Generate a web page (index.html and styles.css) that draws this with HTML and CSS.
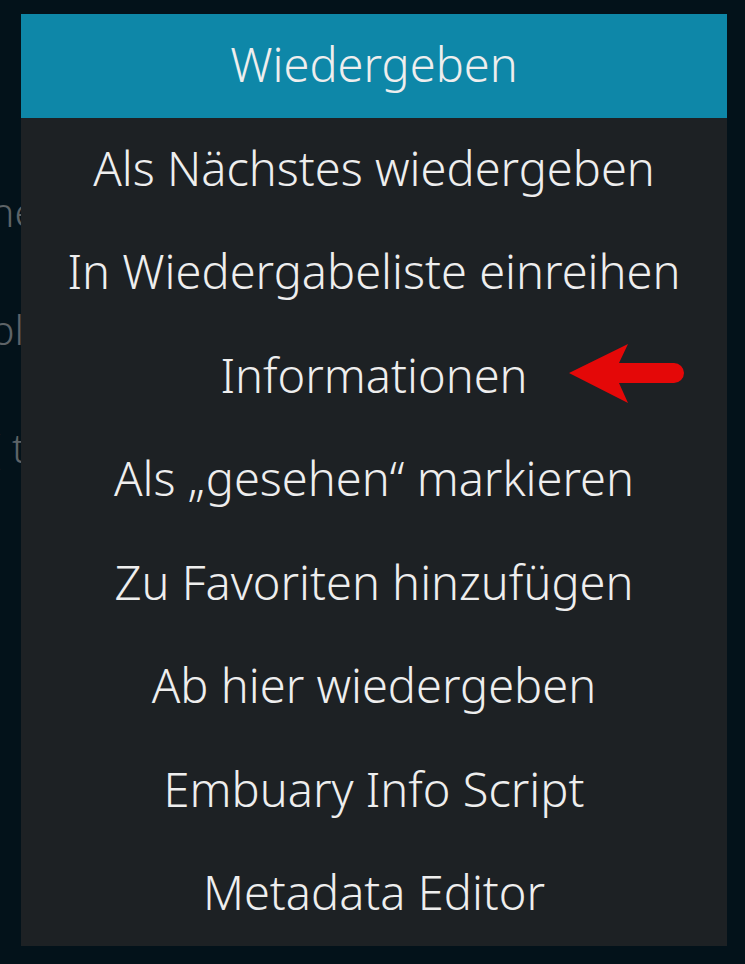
FILE: index.html
```html
<!DOCTYPE html>
<html lang="de">
<head>
  <meta charset="UTF-8">
  <meta name="viewport" content="width=device-width, initial-scale=1.0">
  <title>Kontextmenü</title>
  <link rel="stylesheet" href="styles.css">
</head>
<body>
  <!-- Liste im Hintergrund, vom Menü verdeckt -->
  <div class="backdrop">
    <div class="backdrop-line">ne</div>
    <div class="backdrop-line">bl</div>
    <div class="backdrop-line">( t</div>
  </div>

  <div class="menu">
    <div class="menu-header">Wiedergeben</div>
    <div class="menu-item">Als Nächstes wiedergeben</div>
    <div class="menu-item">In Wiedergabeliste einreihen</div>
    <div class="menu-item">
      Informationen
      <svg class="pointer" width="125" height="68" viewBox="0 0 125 68">
        <path d="M4 33 L63 4 L54 23 H109 A10 10 0 0 1 109 43 H54 L63 63 Z" fill="#e40808"/>
      </svg>
    </div>
    <div class="menu-item">Als „gesehen“ markieren</div>
    <div class="menu-item">Zu Favoriten hinzufügen</div>
    <div class="menu-item">Ab hier wiedergeben</div>
    <div class="menu-item">Embuary Info Script</div>
    <div class="menu-item">Metadata Editor</div>
  </div>
</body>
</html>
```

FILE: styles.css
```css
body {
  margin: 0;
  padding: 14px 0 0 21px;
  height: 964px;
  box-sizing: border-box;
  background: #03121a;
  font-family: 'Noto Sans', 'Open Sans', sans-serif;
  font-weight: 300;
  color: #eeeeee;
  overflow: hidden;
  position: relative;
}

.backdrop {
  position: absolute;
  left: -10px;
  top: 152px;
  font-size: 41px;
  line-height: 118px;
  color: #5d6367;
}

.menu {
  position: relative;
  width: 706px;
  display: flex;
  flex-direction: column;
  background: #1d2124;
}

.menu-header {
  height: 104px;
  background: #0e87a8;
  display: flex;
  align-items: center;
  justify-content: center;
  font-size: 47px;
  padding-bottom: 4px;
  box-sizing: border-box;
}

.menu-item {
  height: 103.5px;
  display: flex;
  align-items: center;
  justify-content: center;
  font-size: 47px;
  position: relative;
  padding-bottom: 4px;
  box-sizing: border-box;
}

.pointer {
  position: absolute;
  left: 544px;
  top: 15px;
}
```
